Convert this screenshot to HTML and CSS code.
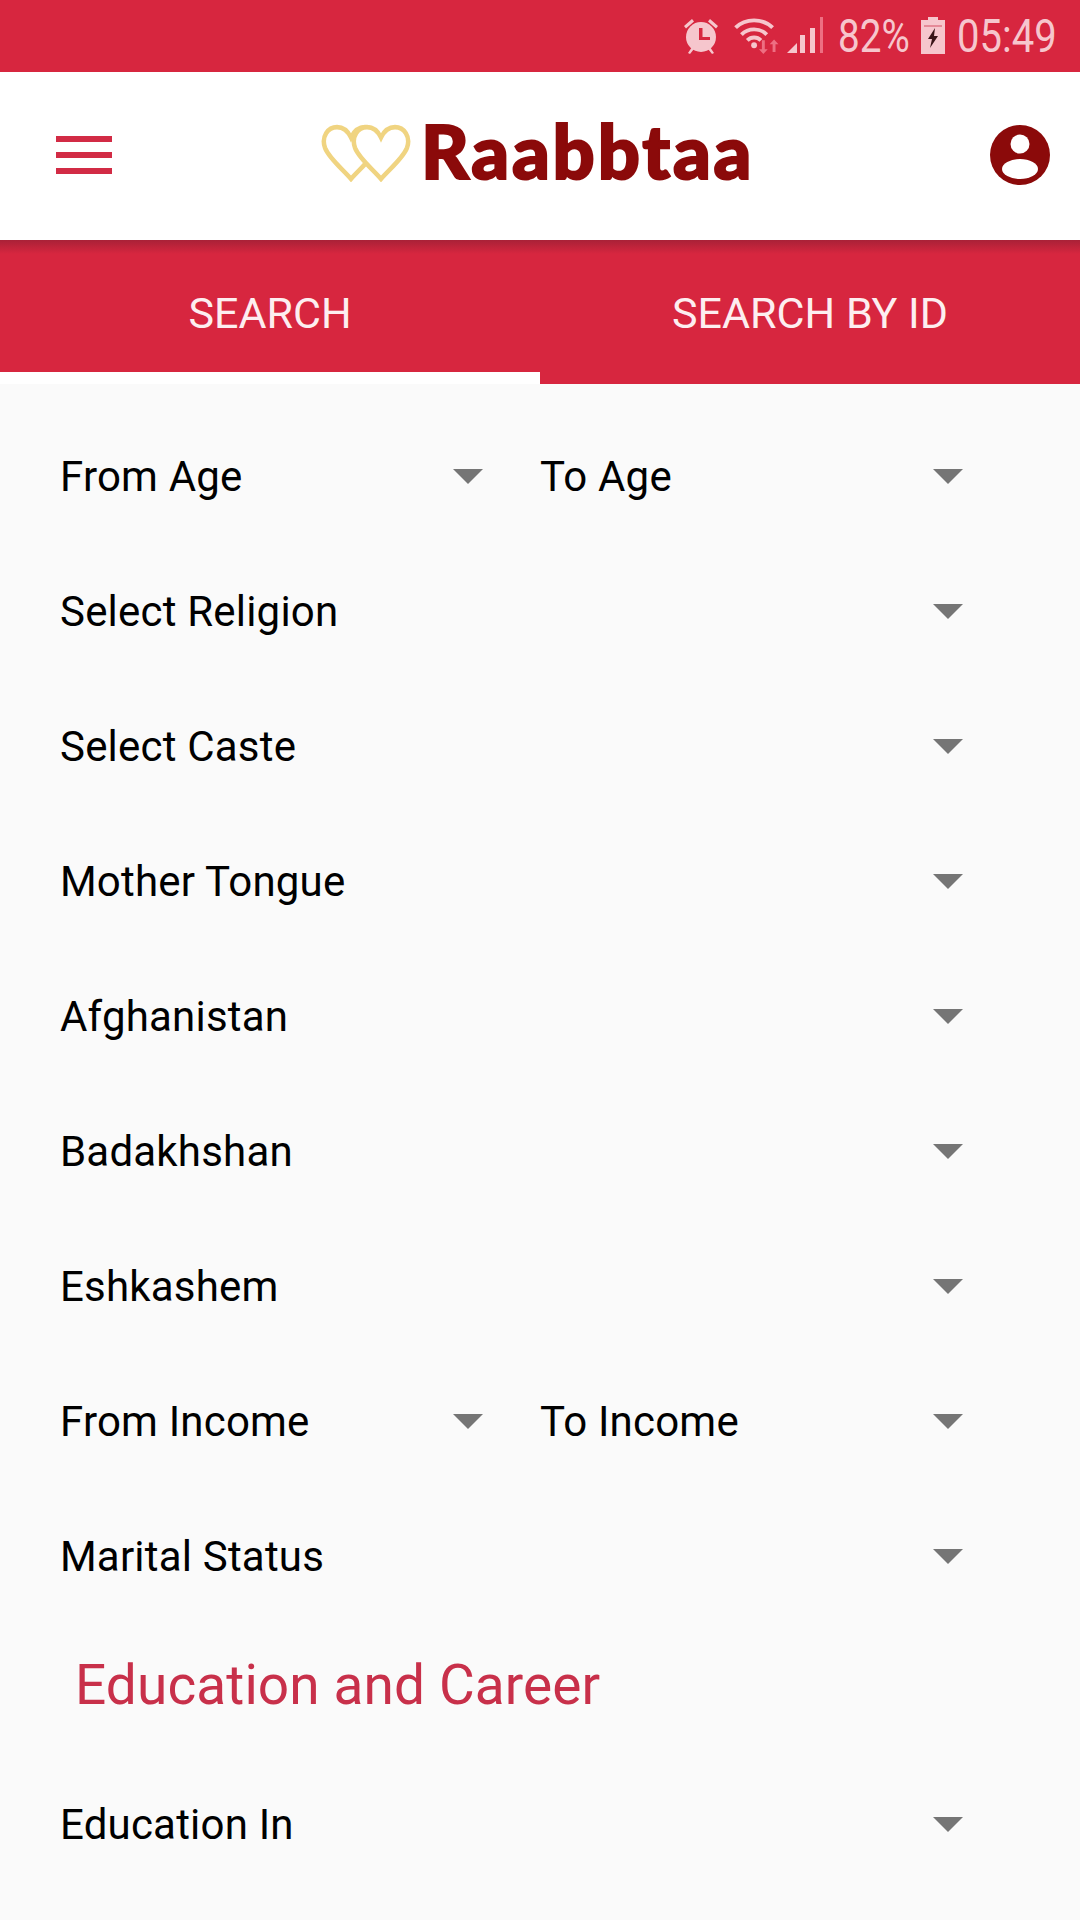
FILE: index.html
```html
<!DOCTYPE html>
<html lang="en">
<head>
<meta charset="utf-8">
<title>Raabbtaa</title>
<link rel="stylesheet" href="styles.css">
</head>
<body>
<div class="phone">
  <div class="status">
    <svg class="ic-alarm" viewBox="0 0 36 38"><g fill="#f6c6cd"><circle cx="18" cy="20" r="15"/><path d="M1 9 9 2l2 2.500-8 7zM35 9 27 2l-2 2.500 8 7z"/><path d="M5 36l4-6 2 2-4 5zM31 36l-4-6-2 2 4 5z"/></g><path d="M16 11h3.500v9H27v3H16z" fill="#d7263f"/></svg>
    <svg class="ic-wifi" viewBox="0 0 49 38"><g fill="none" stroke="#f6c6cd" stroke-width="4"><path d="M2 11C12 1 30 1 40 11"/><path d="M8 18c7-7 19-7 26 0"/><path d="M14 24c4-4 10-4 14 0"/></g><circle cx="21" cy="29" r="3" fill="#f6c6cd"/><path d="M29 24h3v9h3l-4.500 5-4.500-5h3z" fill="#ee6f82"/><path d="M40 36h3v-8h3l-4.500-5-4.500 5h3z" fill="#ee6f82"/></svg>
    <svg class="ic-signal" viewBox="0 0 36 36"><path d="M0 36 10 26v10z" fill="#f6c6cd"/><path d="M13 36V18h5v18zM23 36V11h5v25z" fill="#f6c6cd"/><path d="M33 36V0h3v36z" fill="#ee6f82"/></svg>
    <span class="st-pct">82%</span>
    <svg class="ic-batt" viewBox="0 0 24 37"><path d="M7 0h10v3h7v34H0V3h7z" fill="#f6c6cd"/><path d="M3 8h18v2H3z" fill="#e58a98"/><path d="M14 11 7 22h4l-2 9 8-12h-4z" fill="#3a1418"/></svg>
    <span class="st-time">05:49</span>
  </div>

  <header class="topbar">
    <div class="burger"><i></i><i></i><i></i></div>
    <div class="brand">
      <svg class="hearts" viewBox="0 0 90 56" preserveAspectRatio="none"><g fill="none" stroke="#f0d481" stroke-width="4.500"><path d="M30 53C22 44 8 33 4 23 0 12 7 3 16 3c6 0 11 4 14 10 3-6 8-10 14-10 9 0 16 9 12 20-4 10-18 21-26 30z"/><path d="M60 53C52 44 38 33 34 23 30 12 37 3 46 3c6 0 11 4 14 10 3-6 8-10 14-10 9 0 16 9 12 20-4 10-18 21-26 30z" fill="#fff"/></g></svg>
      <span class="logo-text">Raabbtaa</span>
    </div>
    <svg class="profile" viewBox="0 0 60 60"><circle cx="30" cy="30" r="30" fill="#8b0a0a"/><circle cx="30" cy="19" r="9.500" fill="#fff"/><ellipse cx="30" cy="44" rx="18" ry="10" fill="#fff"/></svg>
  </header>

  <nav class="tabs">
    <div class="tab tab-active">SEARCH</div>
    <div class="tab">SEARCH BY ID</div>
  </nav>

  <main class="form">
    <div class="row"><div class="sel half"><span>From Age</span><i class="caret"></i></div><div class="sel half"><span>To Age</span><i class="caret"></i></div></div>
    <div class="row"><div class="sel"><span>Select Religion</span><i class="caret"></i></div></div>
    <div class="row"><div class="sel"><span>Select Caste</span><i class="caret"></i></div></div>
    <div class="row"><div class="sel"><span>Mother Tongue</span><i class="caret"></i></div></div>
    <div class="row"><div class="sel"><span>Afghanistan</span><i class="caret"></i></div></div>
    <div class="row"><div class="sel"><span>Badakhshan</span><i class="caret"></i></div></div>
    <div class="row"><div class="sel"><span>Eshkashem</span><i class="caret"></i></div></div>
    <div class="row"><div class="sel half"><span>From Income</span><i class="caret"></i></div><div class="sel half"><span>To Income</span><i class="caret"></i></div></div>
    <div class="row"><div class="sel"><span>Marital Status</span><i class="caret"></i></div></div>
    <h2 class="section">Education and Career</h2>
    <div class="row"><div class="sel"><span>Education In</span><i class="caret"></i></div></div>
  </main>
</div>
</body>
</html>
```
FILE: styles.css
```css
* { box-sizing: border-box; }
html, body { margin: 0; padding: 0; }
body { background: #fafafa; font-family: Roboto, "Liberation Sans", sans-serif; }
.phone { width: 1080px; height: 1920px; overflow: hidden; background: #fafafa; }

.status { height: 72px; background: #d7263f; display: flex; align-items: flex-start; color: #f6c6cd; padding: 17px 0 0 683px; }
.status svg { display: block; flex: none; }
.ic-alarm { width: 36px; height: 38px; margin-right: 14px; }
.ic-wifi { width: 49px; height: 37px; margin-right: 5px; }
.ic-signal { width: 36px; height: 36px; margin-right: 15px; }
.ic-batt { width: 24px; height: 37px; margin-right: 12px; }
.st-pct, .st-time { font-size: 46px; line-height: 38px; display: block; transform-origin: left center; transform: scaleX(.84); white-space: nowrap; }
.st-pct { width: 83px; }
.st-time { width: 97px; transform: scaleX(.87); }

.topbar { height: 168px; background: #fff; display: flex; align-items: center; justify-content: space-between; padding: 0 30px 0 56px; position: relative; }
.burger { width: 56px; display: flex; flex-direction: column; gap: 10px; margin-top: -2px; }
.burger i { display: block; height: 6px; background: #d22b45; }
.brand { display: flex; align-items: center; gap: 10px; margin-left: 209px; margin-right: auto; }
.hearts { width: 90px; height: 58px; display: block; margin-bottom: 7px; }
.logo-text { font-family: Lato, sans-serif; font-weight: 900; font-size: 74px; line-height: 76px; color: #8b0a0a; letter-spacing: 2.800px; -webkit-text-stroke: 2px #8b0a0a; margin-bottom: 10px; }
.profile { width: 60px; height: 60px; display: block; margin-top: -2px; }

.tabs { height: 144px; display: flex; background: linear-gradient(to bottom, #a92137 0, #d7263f 14px); }
.tab { flex: 1; color: #fdeef0; font-size: 43px; text-align: center; padding-top: 48px; line-height: 50px; }
.tab-active { border-bottom: 12px solid #fff; }

.form { padding: 25px 60px 0; }
.row { height: 135px; display: flex; }
.sel { flex: 1; display: flex; align-items: center; justify-content: space-between; padding-right: 57px; font-size: 42px; letter-spacing: .2px; color: #000; }
.caret { width: 0; height: 0; border-left: 15px solid transparent; border-right: 15px solid transparent; border-top: 15px solid #757575; }
.section { margin: 0; height: 133px; padding: 31px 0 0 15px; font-size: 55px; font-weight: 400; line-height: 60px; letter-spacing: .1px; color: #c8304a; }
```
